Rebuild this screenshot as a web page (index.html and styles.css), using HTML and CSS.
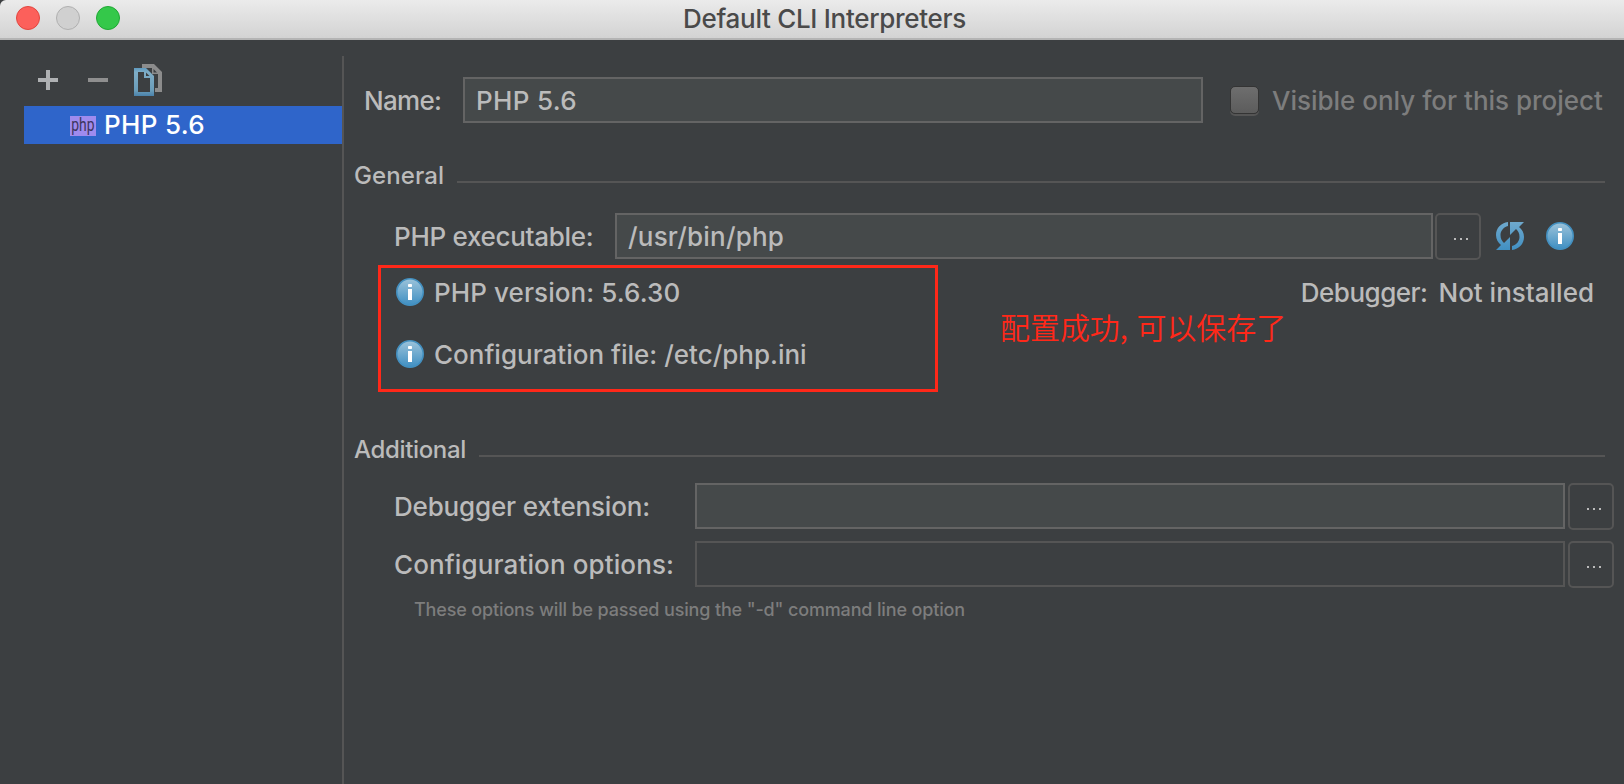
FILE: index.html
```html
<!DOCTYPE html>
<html lang="en">
<head>
<meta charset="utf-8">
<title>Default CLI Interpreters</title>
<link rel="stylesheet" href="styles.css">
</head>
<body>
<svg class="defs" aria-hidden="true">
  <defs>
    <linearGradient id="infoFill" x1="0" y1="0" x2="0" y2="1"><stop offset="0" stop-color="#9cc3da"/><stop offset="1" stop-color="#3f8fc2"/></linearGradient>
    <linearGradient id="blue" x1="0" y1="0" x2="0" y2="1"><stop offset="0" stop-color="#6fa9cd"/><stop offset="1" stop-color="#4190c2"/></linearGradient>
    <linearGradient id="page" x1="0" y1="0" x2="0" y2="1"><stop offset="0" stop-color="#5e9ac0"/><stop offset=".15" stop-color="#7fadc6"/><stop offset=".8" stop-color="#6a9dba"/><stop offset="1" stop-color="#4a82ab"/></linearGradient>
    <symbol id="info" viewBox="0 0 28 28">
      <circle cx="14" cy="14" r="13.2" fill="url(#infoFill)" stroke="#4390c0" stroke-width="1.6"/>
      <rect x="12" y="6" width="4" height="3" rx=".8" fill="#fff"/>
      <rect x="12" y="11" width="4" height="11" fill="#fff"/>
    </symbol>
  </defs>
</svg>
<div class="window">
  <header class="titlebar">
    <div class="lights"><span class="light red"></span><span class="light gray"></span><span class="light green"></span></div>
    <h1 class="title"><span class="t">Default CLI Interpreters</span></h1>
  </header>
  <div class="content">
    <aside class="sidebar">
      <div class="toolbar">
        <svg width="20" height="20" viewBox="0 0 20 20"><path d="M8 0h4v8h8v4h-8v8H8v-8H0V8h8z" fill="#afb1b3"/></svg>
        <svg width="20" height="20" viewBox="0 0 20 20"><path d="M0 8h20v4H0z" fill="#8f8f8f"/></svg>
        <svg width="28" height="32" viewBox="0 0 28 32">
          <path d="M8 0h12l8 8v20h-7v-4h3V10h-6V4H8z" fill="#8c8c8c"/><path d="M19.500 5l3.500 3.500h-3.500z" fill="#3c3f41"/>
          <path fill-rule="evenodd" d="M0 4h12l8 8v20H0zM4 8v20h12V14h-6V8z" fill="url(#page)"/><path d="M12 8.500l3.500 3.500H12z" fill="#3c3f41"/>
        </svg>
      </div>
      <div class="item"><span class="badge"><span class="badgetext">php</span></span><span class="t itemtext">PHP 5.6</span></div>
    </aside>
    <main class="main">
      <div class="row name-row">
        <label class="name"><span class="t">Name:</span></label>
        <div class="field"><span class="t php">PHP 5.6</span></div>
        <span class="check"></span>
        <span class="visible"><span class="t">Visible only for this project</span></span>
      </div>
      <div class="group general"><span class="t">General</span><i></i></div>
      <div class="row exe-row">
        <label><span class="t exe">PHP executable:</span></label>
        <div class="field"><span class="t path">/usr/bin/php</span></div>
        <button class="more"><i></i><i></i><i></i></button>
        <svg class="refresh" width="28" height="28" viewBox="0 0 28 28" fill="url(#blue)">
          <path d="M12 0v4C7.500 5 4.500 9 4.500 13c0 4 1.500 6 3.500 8l6-6v13H0l5-5C2 20.500 0 17.500 0 13 0 6 5 1 12 0z"/>
          <path d="M16 28v-4c4.500-1 7.500-5 7.500-9 0-4-1.500-6-3.500-8l-6 6V0h14l-5 5c3 2.500 5 5.500 5 10 0 7-5 12-12 13z"/>
        </svg>
        <svg class="help" width="28" height="28"><use href="#info"/></svg>
      </div>
      <div class="status">
        <div class="line"><svg width="28" height="28"><use href="#info"/></svg><span class="t ver">PHP version: 5.6.30</span><span class="debugger"><span class="t dbg">Debugger:</span><span class="t ni">Not installed</span></span></div>
        <div class="line"><svg width="28" height="28"><use href="#info"/></svg><span class="t cfg">Configuration file: /etc/php.ini</span></div>
        <div class="highlight"></div>
        <div class="note"><span class="t cn" lang="zh-CN">配置成功, 可以保存了</span></div>
      </div>
      <div class="group additional"><span class="t">Additional</span><i></i></div>
      <div class="row opt-row ext-row">
        <label><span class="t ext">Debugger extension:</span></label>
        <div class="field"></div>
        <button class="more"><i></i><i></i><i></i></button>
      </div>
      <div class="row opt-row">
        <label><span class="t opts">Configuration options:</span></label>
        <div class="field dim"></div>
        <button class="more"><i></i><i></i><i></i></button>
      </div>
      <div class="hint"><span class="t">These options will be passed using the "-d" command line option</span></div>
    </main>
  </div>
</div>
</body>
</html>
```
FILE: styles.css
```css
* { box-sizing: border-box; }
body { margin: 0; background: #3c3f41; color: #bbbbbb; font: 450 26px/32px Inter, "Noto Sans CJK SC", sans-serif; overflow: hidden; }
.defs { position: absolute; width: 0; height: 0; }
.window { width: 1624px; height: 784px; display: flex; flex-direction: column; }
.titlebar { height: 40px; flex: none; display: grid; grid-template-columns: 145px 1fr 120px; background: linear-gradient(#ebebeb, #d3d3d3); border-bottom: 2px solid #b4b4b4; border-top-left-radius: 6px; }
.lights { display: flex; gap: 16px; padding: 6px 0 0 16px; }
.light { width: 24px; height: 24px; border-radius: 50%; border: 1px solid #e2463f; background: #fc605b; }
.light.gray { background: #d0d0d0; border-color: #b0b0b0; }
.light.green { background: #34c84a; border-color: #1fa834; }
.title { margin: 0; padding-top: 3px; font-size: 26px; font-weight: 450; line-height: 32px; letter-spacing: -.3px; color: #4a4a4a; text-align: center; }
.t { white-space: pre; }
.content { flex: 1; display: flex; padding-top: 16px; min-height: 0; }
.sidebar { width: 344px; border-right: 2px solid #555; flex: none; }
.toolbar { height: 50px; display: flex; align-items: flex-start; padding: 8px 0 0 38px; }
.toolbar svg { flex: none; }
.toolbar svg:nth-child(1) { margin: 6px 30px 0 0; }
.toolbar svg:nth-child(2) { margin: 6px 26px 0 0; }
.item { height: 38px; margin-left: 24px; padding-left: 46px; background: #2f65ca; color: #fff; display: flex; align-items: flex-start; }
.badge { width: 26px; height: 20px; margin: 10px 8px 0 0; background: #9f8bee; color: #3d3560; font: 19px/18px "Roboto", sans-serif; display: flex; justify-content: center; }
.badgetext { transform: scaleX(.73); }
.itemtext { padding-top: 3px; letter-spacing: .35px; }
.main { flex: 1; min-width: 0; }
.row { display: flex; align-items: flex-start; }
.field { height: 46px; border: 2px solid #646464; background: #45494a; padding: 6px 0 0 11px; }
.field.dim { background: #3c3f41; border-color: #555; }
.name-row { padding: 21px 0 0 20px; height: 101px; }
.name { width: 99px; letter-spacing: -.7px; }
.name-row .field { width: 740px; }
.php { letter-spacing: .35px; }
.check { width: 29px; height: 28px; margin: 9px 0 0 27px; border: 1px solid #343434; border-radius: 5px; background: linear-gradient(#6e6e6e, #5c5c5c); box-shadow: 0 2px 0 #555; }
.visible { color: #7d7d7d; padding: 8px 0 0 13px; letter-spacing: -.01px; }
.group { display: flex; font-size: 24px; padding: 0 19px 0 10px; height: 32px; }
.group i { flex: 1; height: 2px; background: #555; margin: 21px 0 0 13px; }
.general { height: 56px; padding-top: 3px; letter-spacing: .1px; }
.exe-row { padding-left: 50px; height: 52px; }
.row label { flex: none; padding-top: 8px; }
.exe-row label { width: 221px; }
.exe-row .field { width: 818px; }
.exe { letter-spacing: -.29px; }
.path { letter-spacing: .2px; }
.more { width: 46px; height: 47px; margin: 0 0 0 2px; padding: 4px 0 0 6px; border: 2px solid #555; border-radius: 5px; background: none; display: flex; gap: 4px; align-items: center; justify-content: center; }
.more i { width: 2px; height: 2px; background: #bbb; }
.refresh { margin: 9px 22px 0 15px; }
.help { margin-top: 9px; }
.status { position: relative; height: 168px; padding-left: 52px; }
.line { height: 62px; padding-top: 12px; display: flex; }
.line svg { margin: 1px 10px 0 0; flex: none; }
.ver { letter-spacing: .09px; }
.cfg { letter-spacing: 0; }
.dbg { letter-spacing: -.5px; }
.ni { letter-spacing: 0; }
.debugger { margin-left: auto; padding-right: 30px; display: flex; gap: 11px; }
.highlight { position: absolute; left: 34px; top: 0; width: 560px; height: 127px; border: 3px solid #ff2819; }
.note { position: absolute; left: 656px; top: 43px; color: #ff2819; font: 350 30px/36px "Noto Sans CJK SC", sans-serif; word-spacing: 2px; letter-spacing: -.05px; }
.additional { height: 50px; padding-top: 1px; letter-spacing: -.35px; }
.opt-row { padding-left: 50px; height: 58px; }
.opt-row label { width: 301px; }
.opt-row .field { width: 870px; }
.opt-row .more { margin-left: 3px; }
.ext { letter-spacing: -.17px; }
.opts { letter-spacing: .12px; }
.hint { font-size: 18px; line-height: 24px; padding-left: 70px; color: #7d7d7d; letter-spacing: -.15px; margin-top: -1px; }
```
